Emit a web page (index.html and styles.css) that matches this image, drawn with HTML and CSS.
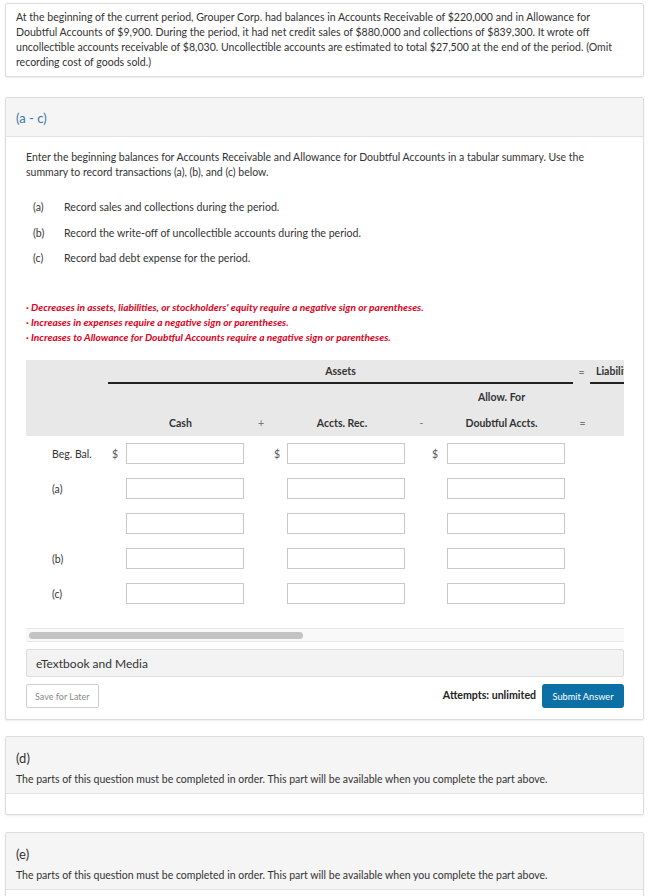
FILE: index.html
```html
<!DOCTYPE html>
<html lang="en">
<head>
    <meta charset="UTF-8">
    <meta name="viewport" content="width=device-width, initial-scale=1.0">
    <title>Grouper Corp. - Tabular Summary</title>
    <link rel="stylesheet" href="styles.css">
</head>
<body>
    <div class="page">
        <div class="card intro">
            <p>At the beginning of the current period, Grouper Corp. had balances in Accounts Receivable of $220,000 and in Allowance for Doubtful Accounts of $9,900. During the period, it had net credit sales of $880,000 and collections of $839,300. It wrote off uncollectible accounts receivable of $8,030. Uncollectible accounts are estimated to total $27,500 at the end of the period. (Omit recording cost of goods sold.)</p>
        </div>

        <div class="card part">
            <div class="part-head">
                <h2 class="part-title active">(a - c)</h2>
            </div>
            <div class="part-body">
                <p class="lead">Enter the beginning balances for Accounts Receivable and Allowance for Doubtful Accounts in a tabular summary. Use the summary to record transactions (a), (b), and (c) below.</p>

                <ul class="steps">
                    <li><span class="step-key">(a)</span>Record sales and collections during the period.</li>
                    <li><span class="step-key">(b)</span>Record the write-off of uncollectible accounts during the period.</li>
                    <li><span class="step-key">(c)</span>Record bad debt expense for the period.</li>
                </ul>

                <ul class="notes">
                    <li>· Decreases in assets, liabilities, or stockholders' equity require a negative sign or parentheses.</li>
                    <li>· Increases in expenses require a negative sign or parentheses.</li>
                    <li>· Increases to Allowance for Doubtful Accounts require a negative sign or parentheses.</li>
                </ul>

                <div class="sheet">
                    <div class="sheet-grid">
                        <div class="head-bg"></div>
                        <div class="hd assets">Assets</div>
                        <div class="hd eq1">=</div>
                        <div class="hd liab">Liabilities</div>
                        <div class="hd allow-top">Allow. For</div>
                        <div class="hd c-cash">Cash</div>
                        <div class="hd op c-op1">+</div>
                        <div class="hd c-ar">Accts. Rec.</div>
                        <div class="hd op c-op2">-</div>
                        <div class="hd c-allow">Doubtful Accts.</div>
                        <div class="hd op c-eq">=</div>

                        <div class="row-label">Beg. Bal.</div>
                        <div class="sign s1">$</div><input class="cell i1" type="text">
                        <div class="sign s2">$</div><input class="cell i2" type="text">
                        <div class="sign s3">$</div><input class="cell i3" type="text">

                        <div class="row-label">(a)</div>
                        <input class="cell i1" type="text">
                        <input class="cell i2" type="text">
                        <input class="cell i3" type="text">

                        <div class="row-label"></div>
                        <input class="cell i1" type="text">
                        <input class="cell i2" type="text">
                        <input class="cell i3" type="text">

                        <div class="row-label">(b)</div>
                        <input class="cell i1" type="text">
                        <input class="cell i2" type="text">
                        <input class="cell i3" type="text">

                        <div class="row-label">(c)</div>
                        <input class="cell i1" type="text">
                        <input class="cell i2" type="text">
                        <input class="cell i3" type="text">
                    </div>
                </div>
                <div class="scrollbar"><div class="thumb"></div></div>

                <div class="media">eTextbook and Media</div>

                <div class="actions">
                    <button class="btn-save">Save for Later</button>
                    <div class="submit-wrap">
                        <span class="attempts">Attempts: unlimited</span>
                        <button class="btn-submit">Submit Answer</button>
                    </div>
                </div>
            </div>
        </div>

        <div class="card part locked">
            <div class="part-head">
                <h2 class="part-title">(d)</h2>
                <p class="locked-text">The parts of this question must be completed in order. This part will be available when you complete the part above.</p>
            </div>
            <div class="locked-body"></div>
        </div>

        <div class="card part locked">
            <div class="part-head">
                <h2 class="part-title">(e)</h2>
                <p class="locked-text">The parts of this question must be completed in order. This part will be available when you complete the part above.</p>
            </div>
            <div class="locked-body"></div>
        </div>
    </div>
</body>
</html>
```

FILE: styles.css
```css
/* General styles */
body {
    font-family: Lato, "Open Sans", Arial, sans-serif;
    margin: 0;
    padding: 0;
    background-color: #fff;
    color: #333;
    overflow: hidden;
}

.page {
    display: flex;
    flex-direction: column;
    gap: 16px;
    padding: 3px 26px 0 5px;
}

/* Cards */
.card {
    background: #fff;
    border: 1px solid #dcdcdc;
    border-radius: 2px;
    box-shadow: 0 1px 2px rgba(0, 0, 0, 0.08);
}

.intro {
    margin-bottom: 4px;
}

.intro p {
    margin: 0;
    padding: 6px 14px 6px 10px;
    font-size: 10.55px;
    line-height: 15px;
}

.part-head {
    background: #f5f5f5;
    border-bottom: 1px solid #e2e2e2;
    padding: 10px 10px 8px;
}

.part-title {
    margin: 0;
    font-size: 13px;
    font-weight: 400;
    line-height: 20px;
}

.part-title.active {
    color: #3a75a8;
}

.part-body {
    padding: 13px 19px 11px 20px;
}

.lead {
    margin: 0;
    font-size: 10.5px;
    line-height: 15px;
}

/* Steps */
.steps {
    list-style: none;
    margin: 20px 0 0;
    padding: 0 0 0 7px;
    display: grid;
    row-gap: 10.5px;
    font-size: 10.6px;
    line-height: 15px;
}

.step-key {
    display: inline-block;
    width: 31px;
}

.notes {
    list-style: none;
    margin: 33.5px 0 0;
    padding: 0;
    color: #e0001b;
    font-size: 10.2px;
    font-weight: 700;
    font-style: italic;
    line-height: 15px;
}

/* Tabular summary */
.sheet {
    margin-top: 15.5px;
    overflow: hidden;
}

.sheet-grid {
    display: grid;
    grid-template-columns: 74px 26px 118px 28px 15px 118px 25px 17px 118px 33px 120px;
    grid-template-rows: 24px 26px 26px repeat(5, 35px);
    width: 692px;
    font-size: 10.5px;
}

.head-bg {
    grid-column: 1 / -1;
    grid-row: 1 / 4;
    background: #e8e8e8;
}

.hd {
    grid-row: 3;
    display: flex;
    align-items: center;
    justify-content: center;
    font-weight: 700;
    color: #333;
}

.hd.op {
    font-weight: 400;
    color: #777;
}

.assets {
    grid-row: 1;
    grid-column: 2 / 10;
    margin: 0 -8px 0 8px;
    border-bottom: 2px solid #222;
}

.eq1 {
    grid-row: 1;
    grid-column: 10;
    font-weight: 400;
    color: #777;
}

.liab {
    grid-row: 1;
    grid-column: 11;
    justify-content: flex-start;
    margin-left: -8px;
    padding-left: 6px;
    border-bottom: 2px solid #222;
    white-space: nowrap;
}

.allow-top { grid-row: 2; grid-column: 9; margin-right: 9px; }
.c-cash { grid-column: 3; margin-right: 9px; }
.c-op1 { grid-column: 4; padding-left: 6px; }
.c-ar { grid-column: 6; margin-right: 8px; }
.c-op2 { grid-column: 7; padding-left: 8px; }
.c-allow { grid-column: 9; margin-right: 9px; }
.c-eq { grid-column: 10; padding-left: 2px; }

.row-label {
    grid-column: 1;
    display: flex;
    align-items: center;
    padding-left: 26px;
}

.sign {
    display: flex;
    align-items: center;
    justify-content: flex-end;
    padding-right: 8px;
    color: #555;
}

.s1 { grid-column: 2; }
.s2 { grid-column: 5; padding-right: 7px; }
.s3 { grid-column: 8; padding-right: 9px; }

.cell {
    align-self: center;
    box-sizing: border-box;
    height: 21px;
    width: 118px;
    margin: 0;
    border: 1px solid #c9c9c9;
    border-radius: 0;
    background: #fff;
    font: inherit;
}

.i1 { grid-column: 3; }
.i2 { grid-column: 6; }
.i3 { grid-column: 9; }

/* Fake horizontal scrollbar under the sheet */
.scrollbar {
    margin-top: 17px;
    height: 12px;
    background: #f9f9f9;
    border-top: 1px solid #e6e6e6;
    border-bottom: 1px solid #e6e6e6;
    display: flex;
    align-items: center;
    padding-left: 3px;
}

.thumb {
    width: 274px;
    height: 7px;
    border-radius: 4px;
    background: #c3c3c3;
}

.media {
    margin-top: 7px;
    height: 28px;
    box-sizing: border-box;
    display: flex;
    align-items: center;
    padding-left: 9px;
    background: #f3f3f3;
    border: 1px solid #dcdcdc;
    border-radius: 2px;
    font-size: 12px;
}

/* Buttons */
.actions {
    margin-top: 7px;
    display: flex;
    justify-content: space-between;
    align-items: center;
}

.btn-save {
    height: 24px;
    padding: 0 8px;
    background: #fff;
    border: 1px solid #cfcfcf;
    border-radius: 2px;
    color: #8a8a8a;
    font-family: inherit;
    font-size: 9px;
}

.submit-wrap {
    display: flex;
    align-items: center;
    gap: 6px;
}

.attempts {
    font-size: 10.6px;
    font-weight: 700;
    color: #222;
    margin-top: -2px;
}

.btn-submit {
    height: 24px;
    padding: 0 10.5px;
    background: #0c70a6;
    border: none;
    border-radius: 3px;
    color: #fff;
    font-family: inherit;
    font-size: 9.2px;
}

/* Locked parts */
.locked {
    margin-bottom: 1px;
}

.locked .part-head {
    padding: 11px 10px 7px;
}

.locked-text {
    margin: 4px 0 0;
    font-size: 10.5px;
    line-height: 14px;
}

.locked-body {
    height: 20px;
}
```
